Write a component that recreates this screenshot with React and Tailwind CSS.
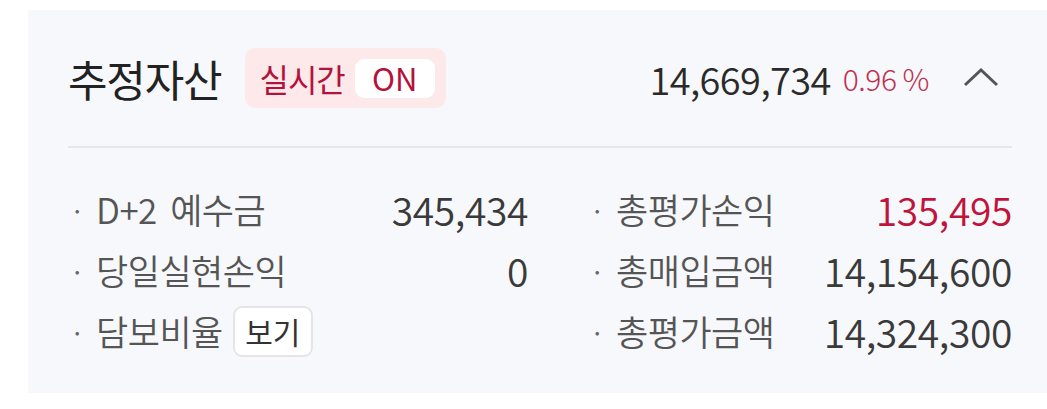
import React from "react";

const font = { fontFamily: '"Noto Sans CJK KR", "Noto Sans", sans-serif' };

function Row({ label, value, valueClass = "text-[#3a3a3a]", extra }) {
  return (
    <div className="flex h-[61px] items-center">
      <span className="w-[26px] text-[26px] text-[#666666]">·</span>
      <span className="text-[35px] font-[350] tracking-[-0.5px] text-[#555555]">{label}</span>
      {extra}
      <span className={`ml-auto text-[39px] font-[350] tracking-[-0.4px] ${valueClass}`}>{value}</span>
    </div>
  );
}

export default function App() {
  return (
    <div className="h-[409px] w-full bg-white pl-[28px] pt-[10px]" style={font}>
      <div className="h-[383px] bg-[#f7f8fb] pl-[40px] pr-[35px]">
        <div className="flex h-[138px] items-center border-b-2 border-[#e6e7ea]">
          <span className="text-[43px] leading-none tracking-[-1.2px] text-[#222222]">추정자산</span>
          <div className="ml-[24px] flex h-[60px] items-center rounded-[10px] bg-[#fde9ea] pl-[14px] pr-[11px]">
            <span className="text-[32px] tracking-[-1px] text-[#b3123c]">실시간</span>
            <span className="ml-[10px] flex h-[39px] w-[80px] items-center justify-center rounded-[9px] bg-white text-[31px] text-[#b3123c]">ON</span>
          </div>
          <span className="ml-auto text-[38px] font-[350] tracking-[-0.6px] text-[#2a2a2a]">14,669,734</span>
          <span className="ml-[12px] text-[30px] font-light tracking-[-0.5px] text-[#c0304f]">0.96 %</span>
          <svg className="ml-[34px] mr-[13px]" width="36" height="20" viewBox="0 0 36 20" fill="none">
            <path d="M2 17 L18 2 L34 17" stroke="#555555" strokeWidth="3" />
          </svg>
        </div>
        <div className="flex pt-[31px]">
          <div className="w-[460px] pl-[2px]">
            <Row
              label={
                <>
                  <span className="mr-[6px]">D+2</span> 예수금
                </>
              }
              value="345,434"
            />
            <Row label="당일실현손익" value="0" />
            <Row
              label="담보비율"
              value=""
              extra={
                <span className="ml-[10px] flex h-[51px] w-[80px] items-center justify-center rounded-[9px] border-2 border-[#e5e5e7] bg-white text-[30px] text-[#333333]">
                  보기
                </span>
              }
            />
          </div>
          <div className="ml-[62px] flex-1">
            <Row label="총평가손익" value="135,495" valueClass="text-[#c0143c]" />
            <Row label="총매입금액" value="14,154,600" />
            <Row label="총평가금액" value="14,324,300" />
          </div>
        </div>
      </div>
    </div>
  );
}
